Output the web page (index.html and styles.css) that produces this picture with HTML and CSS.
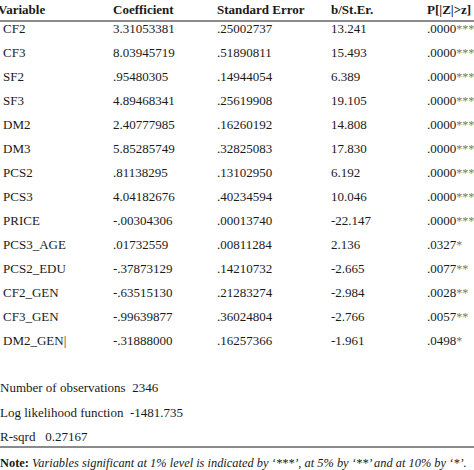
FILE: index.html
```html
<!DOCTYPE html>
<html>
<head>
<meta charset="utf-8">
<link rel="stylesheet" href="styles.css">
</head>
<body>
<div class="page">
  <div class="row head">
    <div class="c1 hv">Variable</div>
    <div class="c2">Coefficient</div>
    <div class="c3">Standard Error</div>
    <div class="c4">b/St.Er.</div>
    <div class="c5">P[|Z|&gt;z]</div>
  </div>
  <div class="body">
    <div class="row"><div class="c1">CF2</div><div class="c2">3.31053381</div><div class="c3">.25002737</div><div class="c4">13.241</div><div class="c5">.0000<span class="st">***</span></div></div>
    <div class="row"><div class="c1">CF3</div><div class="c2">8.03945719</div><div class="c3">.51890811</div><div class="c4">15.493</div><div class="c5">.0000<span class="st">***</span></div></div>
    <div class="row"><div class="c1">SF2</div><div class="c2">.95480305</div><div class="c3">.14944054</div><div class="c4">6.389</div><div class="c5">.0000<span class="st">***</span></div></div>
    <div class="row"><div class="c1">SF3</div><div class="c2">4.89468341</div><div class="c3">.25619908</div><div class="c4">19.105</div><div class="c5">.0000<span class="st">***</span></div></div>
    <div class="row"><div class="c1">DM2</div><div class="c2">2.40777985</div><div class="c3">.16260192</div><div class="c4">14.808</div><div class="c5">.0000<span class="st">***</span></div></div>
    <div class="row"><div class="c1">DM3</div><div class="c2">5.85285749</div><div class="c3">.32825083</div><div class="c4">17.830</div><div class="c5">.0000<span class="st">***</span></div></div>
    <div class="row"><div class="c1">PCS2</div><div class="c2">.81138295</div><div class="c3">.13102950</div><div class="c4">6.192</div><div class="c5">.0000<span class="st">***</span></div></div>
    <div class="row"><div class="c1">PCS3</div><div class="c2">4.04182676</div><div class="c3">.40234594</div><div class="c4">10.046</div><div class="c5">.0000<span class="st">***</span></div></div>
    <div class="row"><div class="c1">PRICE</div><div class="c2">-.00304306</div><div class="c3">.00013740</div><div class="c4">-22.147</div><div class="c5">.0000<span class="st">***</span></div></div>
    <div class="row"><div class="c1">PCS3_AGE</div><div class="c2">.01732559</div><div class="c3">.00811284</div><div class="c4">2.136</div><div class="c5">.0327<span class="st">*</span></div></div>
    <div class="row"><div class="c1">PCS2_EDU</div><div class="c2">-.37873129</div><div class="c3">.14210732</div><div class="c4">-2.665</div><div class="c5">.0077<span class="st">**</span></div></div>
    <div class="row"><div class="c1">CF2_GEN</div><div class="c2">-.63515130</div><div class="c3">.21283274</div><div class="c4">-2.984</div><div class="c5">.0028<span class="st">**</span></div></div>
    <div class="row"><div class="c1">CF3_GEN</div><div class="c2">-.99639877</div><div class="c3">.36024804</div><div class="c4">-2.766</div><div class="c5">.0057<span class="st">**</span></div></div>
    <div class="row"><div class="c1">DM2_GEN|</div><div class="c2">-.31888000</div><div class="c3">.16257366</div><div class="c4">-1.961</div><div class="c5">.0498<span class="st">*</span></div></div>
  </div>
  <div class="stats">
    <div class="stat">Number of observations&nbsp; 2346</div>
    <div class="stat">Log likelihood function&nbsp; -1481.735</div>
    <div class="stat">R-sqrd&nbsp;&nbsp; 0.27167</div>
  </div>
  <div class="note"><b>Note:</b> <i>Variables significant at 1% level is indicated by ‘***’, at 5% by ‘**’ and at 10% by ‘*’.</i></div>
</div>
</body>
</html>
```
FILE: styles.css
```css
html, body {
  margin: 0;
  padding: 0;
  background: #ffffff;
}
.page {
  width: 474px;
  height: 470px;
  overflow: hidden;
  font-family: "Liberation Serif", "Times New Roman", serif;
  font-size: 13px;
  color: #1a1a1a;
}
.row {
  display: grid;
  grid-template-columns: 113px 104px 114px 96px 1fr;
  white-space: nowrap;
}
.row > div:first-child {
  padding-left: 3px;
}
.head {
  font-weight: bold;
  height: 20px;
  line-height: 20px;
  border-bottom: 2px solid #8a8a8a;
}
.head .hv {
  margin-left: -5px;
}
.body .row {
  height: 24px;
  line-height: 13px;
}
.st {
  color: #777;
  font-size: 12px;
}
.stats {
  padding-top: 23px;
}
.stat {
  height: 24.5px;
  line-height: 14px;
  white-space: nowrap;
}
.stat:last-child {
  height: 16px;
}
.note {
  border-top: 2px solid #8a8a8a;
  padding-top: 8px;
  white-space: nowrap;
  line-height: 14px;
  font-size: 12.4px;
}
```
